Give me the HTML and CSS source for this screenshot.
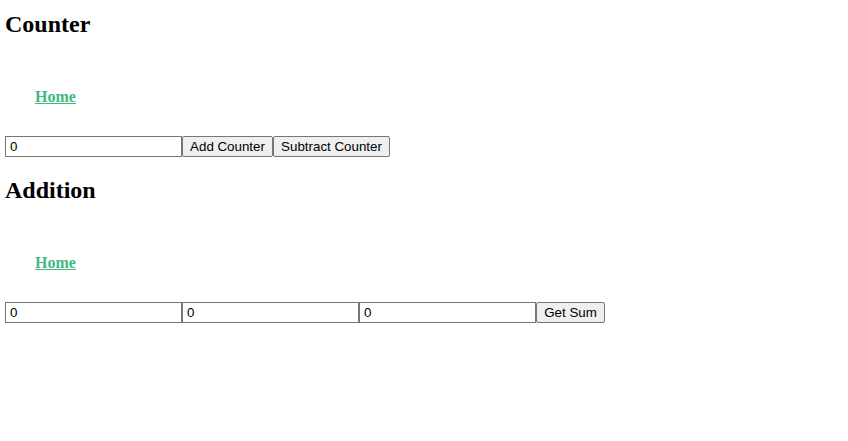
FILE: index.html
```html
<!DOCTYPE html>
<html>
<head>
<meta charset="utf-8">
<title>Counter</title>
<link rel="stylesheet" href="styles.css">
</head>
<body>
<div class="app">
  <section class="section">
    <h2 class="title">Counter</h2>
    <div class="nav"><a class="nav-link" href="#">Home</a></div>
    <div class="row"><input class="field" type="text" value="0"><button class="btn btn-add">Add Counter</button><button class="btn btn-sub">Subtract Counter</button></div>
  </section>
  <section class="section">
    <h2 class="title">Addition</h2>
    <div class="nav"><a class="nav-link" href="#">Home</a></div>
    <div class="row"><input class="field" type="text" value="0"><input class="field" type="text" value="0"><input class="field" type="text" value="0"><button class="btn btn-sum">Get Sum</button></div>
  </section>
</div>
</body>
</html>
```

FILE: styles.css
```css
html, body {
  background: #ffffff;
}
body {
  margin: 0 5px;
  font-family: "Liberation Serif", "Times New Roman", serif;
  color: #000000;
}
.app {
  display: flow-root;
}
.title {
  font-family: "Liberation Serif", "Times New Roman", serif;
  font-size: 24px;
  font-weight: bold;
  margin: 19.92px 0;
}
.section:first-child .title {
  margin-top: 11px;
}
.nav {
  padding: 30px;
  font-size: 16px;
}
.nav-link {
  font-weight: bold;
  color: #42b983;
  text-decoration: underline;
}
.row {
  display: flex;
  align-items: stretch;
  height: 21px;
}
.field {
  box-sizing: border-box;
  width: 177px;
  height: 21px;
  margin: 0;
  padding: 1px 4px;
  border: 1px solid #767676;
  border-radius: 0;
  font-family: "Liberation Sans", Arial, sans-serif;
  font-size: 13.333px;
  color: #000000;
  background: #ffffff;
}
.btn {
  box-sizing: border-box;
  height: 21px;
  margin: 0;
  padding: 1px 6px;
  border: 1px solid #767676;
  border-radius: 2px;
  background: #efefef;
  font-family: "Liberation Sans", Arial, sans-serif;
  font-size: 13.333px;
  color: #000000;
  line-height: 17px;
}
.btn-add { width: 91px; }
.btn-sub { width: 117px; }
.btn-sum { width: 69px; }
```
